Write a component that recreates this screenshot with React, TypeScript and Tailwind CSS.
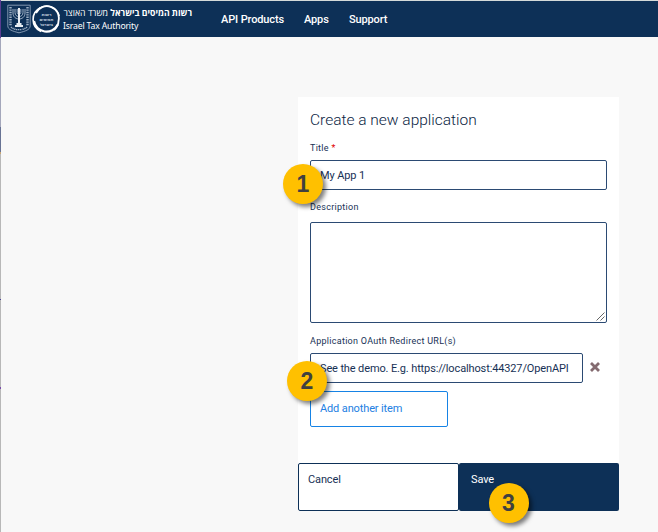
import type { ReactNode } from 'react';

function Emblem() {
  return (
    <svg width="24" height="30" viewBox="0 0 24 30" fill="none" stroke="#9fb0c5" strokeWidth="0.8">
      <path d="M.8 1.200h22.400v20.600c0 4-5 5.400-11.200 7C5.800 27.200.8 25.800.8 21.800Z" />
      <path d="M6 5v4c0 8 12 8 12 0V5M8 5v3.500c0 5.500 8 5.500 8 0V5M10.200 5v3.500c0 2.500 3.600 2.500 3.600 0V5" strokeWidth="1" />
      <path d="M12 4v17" strokeWidth="2" stroke="#e6ecf2" />
      <path d="M8 22h8M9.500 20h5" strokeWidth="1.800" stroke="#e6ecf2" />
      <path d="M3.500 3v19M20.500 3v19" strokeWidth="2.400" strokeDasharray="1.400 1" />
      <path d="M4 23c1 1.300 3 2 4.600 2.300M20 23c-1 1.300-3 2-4.600 2.300M9 25.600h6" strokeWidth="1.400" strokeDasharray="1.300 .6" />
    </svg>
  );
}

function TaxLogo() {
  return (
    <svg width="29" height="29" viewBox="0 0 29 29" fill="none" stroke="#fff">
      <path d="M8.500 2.800A13 13 0 0 0 9 26.500" strokeWidth="1.600" />
      <path d="M2 16A12.600 12.600 0 0 0 25.800 19.500" strokeWidth="2.200" />
      <path d="M4 8A12 12 0 0 1 26.500 16Q26.500 21 22 25" strokeWidth="1.800" />
      <path d="M7 3.500A13 13 0 0 1 27.300 11" strokeWidth="1.200" />
      <g fill="#c3cfdd" stroke="none" fontFamily="'Open Sans', sans-serif" fontSize="3.7" fontWeight="700" textAnchor="middle">
        <text x="14.5" y="10.8" textLength="10" lengthAdjust="spacingAndGlyphs">רשות</text>
        <text x="14.5" y="16" textLength="14" lengthAdjust="spacingAndGlyphs">המיסים</text>
        <text x="14.5" y="21.2" textLength="13" lengthAdjust="spacingAndGlyphs">בישראל</text>
      </g>
    </svg>
  );
}

function Badge({ children, className }: { children: ReactNode; className: string }) {
  return (
    <span className={`absolute flex size-10 items-center justify-center rounded-full bg-[#ffc000] font-['Liberation_Sans',sans-serif] text-[23px] leading-none font-bold text-[#404040] shadow-[3px_3px_4px_rgba(0,0,0,0.5)] ${className}`}>
      {children}
    </span>
  );
}

function Label({ children, className = '' }: { children: ReactNode; className?: string }) {
  return <div className={`h-3 text-[9px] leading-3 tracking-[0.28px] whitespace-nowrap ${className}`}>{children}</div>;
}

export default function App() {
  return (
    <div className="flex h-[532px] w-[658px] overflow-hidden bg-[#f8f8f8] font-[Roboto,'Open_Sans',sans-serif] text-[#173155]">
      <div className="flex w-px shrink-0 flex-col">
        <div className="h-[38px] bg-[#593b91]" />
        <div className="h-[89px] bg-[#a4a7bb]" />
        <div className="h-[25px] bg-[#687394]" />
        <div className="h-[2px] bg-[#c6a574]" />
        <div className="h-[145px] bg-[#b8b8b8]" />
        <div className="h-px bg-[#4c4395]" />
        <div className="h-[87px] bg-[#b8b8b8]" />
        <div className="h-[2px] bg-[#794caa]" />
        <div className="grow bg-[#b8b8b8]" />
      </div>
      <div className="flex grow flex-col">
        <header className="flex h-[37px] shrink-0 items-start border-t border-[#d4dad9] bg-[#0d3057] text-white">
          <div className="mt-[3px] ml-[6px]"><Emblem /></div>
          <div className="mt-[4px] ml-px"><TaxLogo /></div>
          <div className="mt-[6px] ml-[2px] w-[130px] font-['Open_Sans',sans-serif] whitespace-nowrap">
            <div dir="rtl" className="h-[13px] w-[129px] text-[8.7px] leading-[13px]">
              <b>רשות המיסים בישראל</b> משרד האוצר
            </div>
            <div className="h-[13px] font-['Noto_Sans',sans-serif] text-[8.7px] leading-[13px] tracking-[-0.18px]">Israel Tax Authority</div>
          </div>
          <nav className="mt-[11px] ml-[28px] flex text-[11px] leading-4 font-medium tracking-[-0.13px] whitespace-nowrap">
            <span className="w-[83px]">API Products</span>
            <span className="w-[45px]">Apps</span>
            <span>Support</span>
          </nav>
        </header>
        <main className="relative mt-[60px] ml-[297px] w-[321px]">
          <section className="flex h-[366px] flex-col bg-white px-3 pt-[12px]">
            <h1 className="h-[22px] text-[15.5px] leading-[22px] font-light whitespace-nowrap text-[#0a2342]">Create a new application</h1>
            <Label className="mt-[11px]">Title <span className="text-[#e00000]">*</span></Label>
            <div className="mt-[6px] h-[30px] w-[297px] rounded-[2px] border border-[#2b4a73] pt-px pl-[9px] text-[11px] leading-[28px] tracking-[-0.13px]">My App 1</div>
            <Label className="mt-[11px]">Description</Label>
            <div className="mt-[9px] flex h-[101px] w-[297px] items-end justify-end rounded-[2px] border border-[#2b4a73] p-px">
              <svg width="9" height="9" viewBox="0 0 9 9" stroke="#555" strokeWidth="0.9"><path d="M.5 8.500l8-8M4.500 8.500l4-4" /></svg>
            </div>
            <Label className="mt-[12px]">Application OAuth Redirect URL(s)</Label>
            <div className="mt-[6px] flex items-center">
              <div className="h-[30px] w-[273px] rounded-[2px] border border-[#2b4a73] pt-px pl-[9px] text-[11px] leading-[28px] tracking-[-0.13px] whitespace-nowrap">See the demo. E.g. https://localhost:44327/OpenAPI</div>
              <svg className="-mt-[2px] ml-[7px]" width="10" height="10" viewBox="0 0 10 10" stroke="#846b70" strokeWidth="2.8"><path d="M1 1l8 8M9 1L1 9" /></svg>
            </div>
            <button className="mt-[8px] h-[36px] w-[138px] rounded-[2px] border border-[#1683e5] pt-px pl-[9px] text-left text-[11px] tracking-[-0.13px] text-[#2380e2]">Add another item</button>
          </section>
          <footer className="flex h-[48px] text-[11px] leading-4 tracking-[-0.13px]">
            <button className="flex w-[161px] items-start rounded-[2px] border border-[#0d3057] bg-white pt-[8px] pl-[9px]">Cancel</button>
            <button className="flex w-[160px] items-start rounded-[2px] bg-[#0d3057] pt-[9px] pl-[12px] text-white">Save</button>
          </footer>
          <Badge className="top-[67px] -left-[15px]">1</Badge>
          <Badge className="top-[264px] -left-[11px]">2</Badge>
          <Badge className="top-[386px] left-[190.5px]">3</Badge>
        </main>
      </div>
    </div>
  );
}
